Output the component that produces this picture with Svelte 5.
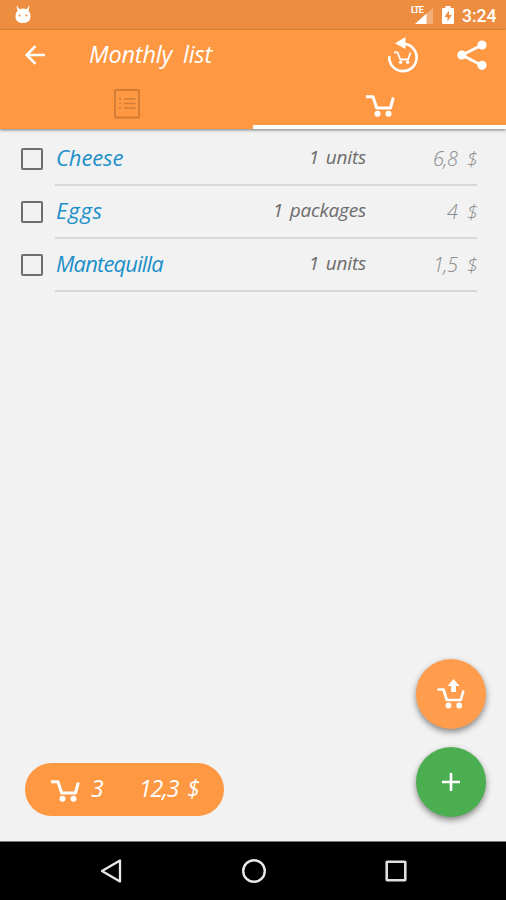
<script lang="ts">
  interface Item {
    name: string;
    quantity: string;
    price: string;
    spacing: string;
  }

  const items: Item[] = [
    { name: 'Cheese', quantity: '1 units', price: '6,8 $', spacing: 'normal' },
    { name: 'Eggs', quantity: '1 packages', price: '4 $', spacing: 'wide' },
    { name: 'Mantequilla', quantity: '1 units', price: '1,5 $', spacing: 'tight' }
  ];
</script>

{#snippet cart()}
  <svg class="cart" viewBox="0 0 30 22" aria-hidden="true">
    <path d="M1 1.8h7l3.7 11.2h13.8L28.3 2.5" fill="none" stroke="#fff" stroke-width="3" stroke-linejoin="round" />
    <circle cx="12.5" cy="18.8" r="3" fill="#fff" />
    <circle cx="23.5" cy="18.8" r="3" fill="#fff" />
  </svg>
{/snippet}

<div class="screen">
  <div class="status-bar">
    <svg class="android" viewBox="0 0 18 18" aria-hidden="true">
      <path d="M3.3 0l2 3.2q3.7-1.2 7.4 0l2-3.2 .8 .5-1 4.2q2 1.7 2 5.3c0 4.5-2.5 7-7.500 7s-7.500-2.500-7.500-7q0-3.600 2-5.300l-1-4.200z" fill="#fff" />
      <circle cx="5.6" cy="9.5" r="1" fill="#ec8d40" />
      <circle cx="12.4" cy="9.5" r="1" fill="#ec8d40" />
    </svg>
    <div class="signal">
      <span class="lte">LTE</span>
      <svg viewBox="0 0 18 16" aria-hidden="true">
        <path d="M0 16L18 0v16z" fill="#fff" opacity="0.3" />
        <path d="M0 16L11.5 5.5V16z" fill="#fff" />
      </svg>
    </div>
    <svg class="battery" viewBox="0 0 12 18" aria-hidden="true">
      <path d="M3.5 0h5v2H11q1 0 1 1v14q0 1-1 1H1q-1 0-1-1V3q0-1 1-1h2.5z" fill="#fff" />
      <path d="M7 4.5L2.500 11h3v4.500L9.800 9H7z" fill="#ec8d40" />
    </svg>
    <span class="clock">3:24</span>
  </div>

  <header>
    <div class="toolbar">
      <svg class="back" viewBox="0 0 20 20" aria-hidden="true">
        <path d="M20 10H2M10.5 1.200L1.700 10l8.800 8.800" fill="none" stroke="#fff" stroke-width="2.600" />
      </svg>
      <h1>Monthly list</h1>
      <svg class="restore" viewBox="0 0 32 36" aria-hidden="true">
        <path d="M2.300 19.200A13.700 13.700 0 1 0 17 6.800" fill="none" stroke="#fff" stroke-width="2.600" />
        <path d="M8 6.300L18.500 0v12z" fill="#fff" />
        <path d="M7 15.300h3.500l3 7.200h7.500l2.500-7" fill="none" stroke="#fff" stroke-width="1.800" />
        <circle cx="13.600" cy="25.300" r="1.700" fill="#fff" />
        <circle cx="20.700" cy="25.300" r="1.700" fill="#fff" />
      </svg>
      <svg class="share" viewBox="0 0 30 30" aria-hidden="true">
        <path d="M25 5L5 15l20 10.500" fill="none" stroke="#fff" stroke-width="2.800" />
        <circle cx="25" cy="5" r="4.600" fill="#fff" />
        <circle cx="4.800" cy="15" r="4.600" fill="#fff" />
        <circle cx="25" cy="25.300" r="4.600" fill="#fff" />
      </svg>
    </div>
    <div class="tabs">
      <div class="tab">
        <svg class="list-icon" viewBox="0 0 26 30" aria-hidden="true">
          <rect x="1" y="1" width="24" height="27.500" rx="1" fill="none" stroke="#d27c36" stroke-width="1.800" />
          <path d="M5 10h2M5 14.500h2M5 19h2M10 10h11.500M10 14.500h11.500M10 19h11.500" stroke="#d27c36" stroke-width="1.700" />
        </svg>
      </div>
      <div class="tab active">{@render cart()}</div>
    </div>
  </header>

  <main>
    <ul>
      {#each items as item}
        <li>
          <span class="checkbox"></span>
          <div class="row">
            <span class="name {item.spacing}">{item.name}</span>
            <span class="quantity">{item.quantity}</span>
            <span class="price">{item.price}</span>
          </div>
        </li>
      {/each}
    </ul>

    <div class="bottom">
      <div class="summary">
        {@render cart()}
        <span class="count">3</span>
        <span class="total">12,3 $</span>
      </div>
      <div class="actions">
        <div class="fab">
          <svg viewBox="0 0 30 30" aria-hidden="true">
            <path d="M1.500 10.500h6L10.800 21h14L27.500 11.500" fill="none" stroke="#fff" stroke-width="2.600" stroke-linejoin="round" />
            <circle cx="12.500" cy="26.500" r="2.900" fill="#fff" />
            <circle cx="23.200" cy="26.500" r="2.900" fill="#fff" />
            <path d="M17.500 0l6 7h-3.600v6h-4.800V7h-3.600z" fill="#fff" />
          </svg>
        </div>
        <div class="fab add">
          <svg viewBox="0 0 30 30" aria-hidden="true">
            <path d="M6 15h18M15 6v18" stroke="#fff" stroke-width="2.600" />
          </svg>
        </div>
      </div>
    </div>
  </main>

  <nav>
    <svg viewBox="0 0 26 26" aria-hidden="true">
      <path d="M22 2.500v21L4 13z" fill="none" stroke="#e8e8e8" stroke-width="2.300" stroke-linejoin="round" />
    </svg>
    <svg viewBox="0 0 26 26" aria-hidden="true">
      <circle cx="13" cy="13" r="10.800" fill="none" stroke="#e8e8e8" stroke-width="2.400" />
    </svg>
    <svg viewBox="0 0 26 26" aria-hidden="true">
      <rect x="3.700" y="3.700" width="18.600" height="18.600" rx="0.500" fill="none" stroke="#e0e0e0" stroke-width="2.600" />
    </svg>
  </nav>
</div>

<style>
  :global(body) {
    margin: 0;
  }

  .screen {
    display: flex;
    flex-direction: column;
    width: 506px;
    height: 900px;
    overflow: hidden;
    background: #f2f2f2;
    font-family: "Open Sans", "Noto Sans", sans-serif;
    font-style: italic;
    white-space: nowrap;
  }

  svg {
    display: block;
    flex-shrink: 0;
  }

  .status-bar {
    display: flex;
    align-items: center;
    box-sizing: border-box;
    height: 30px;
    padding: 0 9px 0 14px;
    background: #ec8d40;
    color: #fff;
    font-family: Roboto, sans-serif;
    font-style: normal;
  }

  .android {
    width: 18px;
    height: 18px;
    margin-right: auto;
  }

  .signal {
    position: relative;
    width: 22px;
    height: 18px;
    margin-right: 9px;
  }

  .signal svg {
    width: 18px;
    height: 16px;
    margin: 2px 0 0 4px;
  }

  .lte {
    position: absolute;
    top: 0;
    left: 0;
    font-size: 9px;
    font-weight: 700;
    line-height: 9px;
    letter-spacing: -0.9px;
  }

  .battery {
    width: 12px;
    height: 18px;
    margin-right: 8px;
  }

  .clock {
    width: 35px;
    font-size: 17.5px;
    font-weight: 500;
    line-height: 30px;
    padding-top: 2px;
  }

  header {
    position: relative;
    height: 99px;
    flex-shrink: 0;
    background: #ff9843;
    box-shadow: 0 1px 3px rgba(0, 0, 0, 0.5);
  }

  .toolbar {
    display: flex;
    align-items: center;
    height: 50px;
    padding: 0 19px 0 25px;
  }

  .back {
    width: 20px;
    height: 20px;
    margin-right: 44px;
  }

  h1 {
    flex: 1;
    margin: 0 0 2px;
    color: #fff;
    font-size: 23.5px;
    font-weight: 400;
    line-height: 46px;
    letter-spacing: -0.2px;
    word-spacing: 5px;
  }

  .restore {
    width: 32px;
    height: 36px;
    margin-right: 38px;
  }

  .share {
    width: 30px;
    height: 30px;
  }

  .tabs {
    display: flex;
    height: 49px;
  }

  .tab {
    display: flex;
    flex: 1;
    justify-content: center;
    box-sizing: border-box;
    padding-top: 9px;
  }

  .tab.active {
    padding-top: 15px;
    border-bottom: 4px solid #fff;
  }

  .list-icon {
    width: 26px;
    height: 30px;
  }

  .cart {
    width: 30px;
    height: 22px;
  }

  main {
    display: flex;
    flex: 1;
    flex-direction: column;
    justify-content: space-between;
    padding-top: 4px;
  }

  ul {
    margin: 0;
    padding: 0 29px 0 21px;
    list-style: none;
  }

  li {
    display: flex;
    gap: 12px;
    height: 53px;
  }

  .checkbox {
    box-sizing: border-box;
    width: 22px;
    height: 22px;
    margin-top: 15px;
    border: 2px solid #6e6e6e;
    border-radius: 2px;
  }

  .row {
    display: flex;
    flex: 1;
    box-sizing: border-box;
    border-bottom: 2px solid #d8d8d8;
    line-height: 49px;
  }

  .name {
    flex: 1;
    padding-left: 1px;
    color: #1c8fc9;
    font-size: 22px;
  }

  .name.normal {
    letter-spacing: -0.1px;
  }

  .name.wide {
    letter-spacing: 0.8px;
  }

  .name.tight {
    letter-spacing: -0.85px;
  }

  .quantity {
    color: #6c6c6c;
    font-size: 19px;
    letter-spacing: -0.2px;
    word-spacing: 2px;
    text-align: right;
  }

  .price {
    width: 111px;
    color: #8c8c8c;
    font-size: 20px;
    font-weight: 300;
    line-height: 51px;
    letter-spacing: -0.7px;
    word-spacing: 5px;
    text-align: right;
  }

  .bottom {
    display: flex;
    align-items: flex-end;
    justify-content: space-between;
    padding: 0 20px 24px 25px;
  }

  .summary {
    display: flex;
    align-items: center;
    box-sizing: border-box;
    width: 199px;
    height: 53px;
    margin-bottom: 1px;
    padding-left: 25px;
    border-radius: 27px;
    background: #ff9843;
    color: #fff;
    font-size: 23px;
    line-height: 48px;
  }

  .count {
    box-sizing: border-box;
    width: 49px;
    margin-bottom: 3px;
    padding-left: 11px;
  }

  .summary .cart {
    margin-top: 2px;
  }

  .total {
    margin: 0 0 3px 10px;
    letter-spacing: -1.1px;
    word-spacing: 4px;
  }

  .actions {
    display: flex;
    flex-direction: column;
    gap: 18px;
  }

  .fab {
    display: flex;
    align-items: center;
    justify-content: center;
    width: 70px;
    height: 70px;
    border-radius: 50%;
    background: #ff9d4d;
    box-shadow: 0 3px 6px rgba(0, 0, 0, 0.45);
  }

  .fab svg {
    width: 30px;
    height: 30px;
  }

  .fab.add {
    background: #4bae50;
  }

  nav {
    display: flex;
    align-items: center;
    justify-content: space-between;
    height: 58px;
    padding: 0 97px 0 98px;
    border-top: 1px solid #777;
    background: #000;
  }

  nav svg {
    width: 26px;
    height: 26px;
  }
</style>
